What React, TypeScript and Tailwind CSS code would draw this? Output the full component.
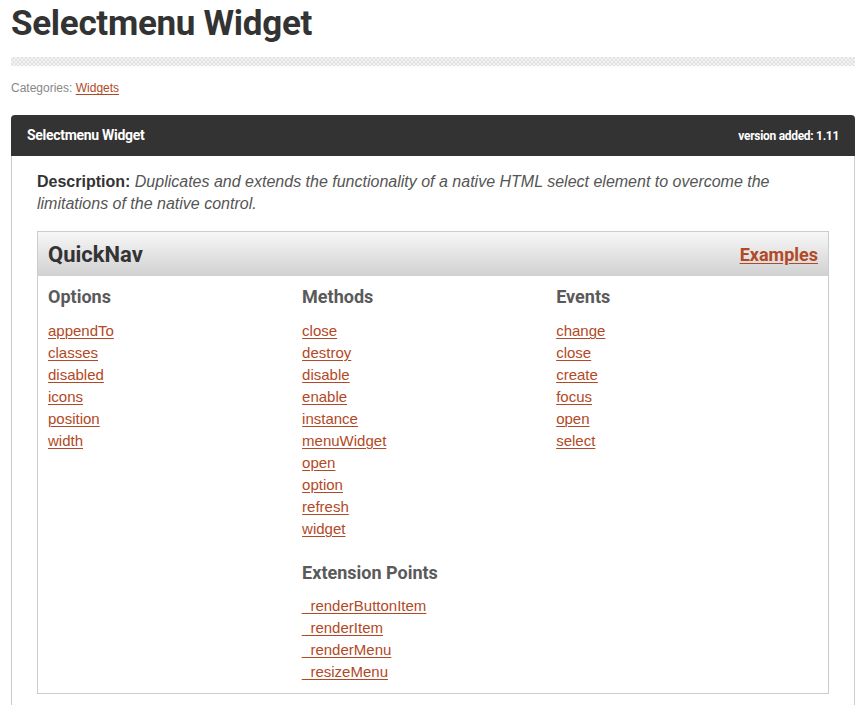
const options = ["appendTo", "classes", "disabled", "icons", "position", "width"];
const methods = ["close", "destroy", "disable", "enable", "instance", "menuWidget", "open", "option", "refresh", "widget"];
const events = ["change", "close", "create", "focus", "open", "select"];
const extensionPoints = ["_renderButtonItem", "_renderItem", "_renderMenu", "_resizeMenu"];

const heading = "font-['Roboto',sans-serif] font-bold text-[18px] text-[#5a5a5a] leading-[22px]";
const linkCls = "text-[#b24926] underline underline-offset-2 decoration-1";

const LinkList = ({ items, tight }: { items: string[]; tight?: boolean }) => (
  <ul className={`${tight ? "mt-[11px]" : "mt-[12px]"} font-['Liberation_Sans',Arial,sans-serif] text-[15px] leading-[22px]`}>
    {items.map((it) => (
      <li key={it}>
        <a href="#" className={linkCls}>
          {it}
        </a>
      </li>
    ))}
  </ul>
);

export default function App() {
  return (
    <div className="min-h-screen bg-white pl-[11px] pr-[7px] font-['Liberation_Sans',Arial,sans-serif]">
      <h1 className="pt-[3px] font-['Roboto',sans-serif] font-bold text-[35px] leading-[42px] text-[#333] tracking-[-0.3px]">
        Selectmenu Widget
      </h1>
      <div className="mt-[12px] h-[9px] bg-[repeating-conic-gradient(#e2e2e2_0_25%,#f3f3f3_0_50%)] bg-[length:4px_4px]" />
      <p className="mt-[15px] text-[12px] leading-[14px] text-[#888]">
        Categories:{" "}
        <a href="#" className={linkCls}>
          Widgets
        </a>
      </p>

      <div className="mt-[20px]">
        <div className="flex h-[41px] items-center justify-between rounded-t-[4px] bg-[#333] px-4 font-['Roboto',sans-serif] font-bold text-white">
          <span className="text-[14px] tracking-[-0.3px]">Selectmenu Widget</span>
          <span className="text-[12px] tracking-[-0.3px]">version added: 1.11</span>
        </div>
        <div className="border-x border-[#ccc] px-[25px] pt-[15px] pb-[40px]">
          <p className="text-[16px] leading-[22px] text-[#555]">
            <strong className="text-[#333]">Description:</strong>{" "}
            <em>
              Duplicates and extends the functionality of a native HTML select element to overcome the limitations of
              the native control.
            </em>
          </p>

          <div className="mt-[16px] border border-[#ccc]">
            <div className="flex h-[44px] items-center justify-between bg-linear-to-b from-[#f7f7f7] to-[#d1d1d1] px-[10px]">
              <h2 className="font-['Roboto',sans-serif] font-bold text-[22px] text-[#333]">QuickNav</h2>
              <a href="#" className="font-['Roboto',sans-serif] font-bold text-[18px] text-[#b24926] underline underline-offset-2">
                Examples
              </a>
            </div>
            <div className="flex px-[10px] pt-[10px] pb-[10px]">
              <div className="w-[33%]">
                <h3 className={heading}>Options</h3>
                <LinkList items={options} />
              </div>
              <div className="w-[33%]">
                <h3 className={heading}>Methods</h3>
                <LinkList items={methods} />
                <h3 className={`${heading} mt-[22px]`}>Extension Points</h3>
                <LinkList items={extensionPoints} tight />
              </div>
              <div className="w-[33%]">
                <h3 className={heading}>Events</h3>
                <LinkList items={events} />
              </div>
            </div>
          </div>
        </div>
      </div>
    </div>
  );
}
